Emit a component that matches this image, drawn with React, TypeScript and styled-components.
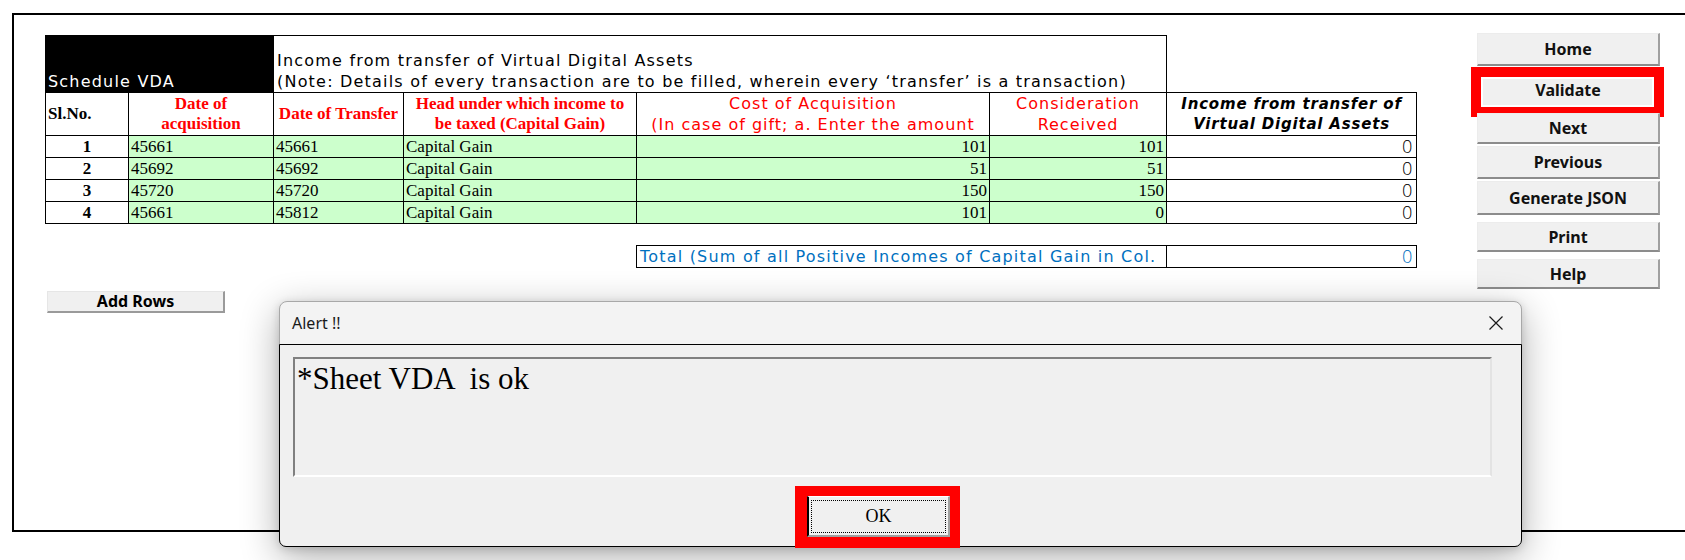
import React from 'react'
import styled, { createGlobalStyle } from 'styled-components'

const GlobalStyle = createGlobalStyle`
  html, body {
    margin: 0;
    padding: 0;
    background: #ffffff;
    overflow: hidden;
  }
`

const GOTHIC = `"DejaVu Sans", "Noto Sans CJK JP", sans-serif`
const TIMES = `"Liberation Serif", "Times New Roman", serif`
const UI = `"Noto Sans", "Open Sans", sans-serif`

const rows = [
  { no: 1, acq: '45661', tr: '45661', head: 'Capital Gain', cost: '101', cons: '101', inc: '0' },
  { no: 2, acq: '45692', tr: '45692', head: 'Capital Gain', cost: '51', cons: '51', inc: '0' },
  { no: 3, acq: '45720', tr: '45720', head: 'Capital Gain', cost: '150', cons: '150', inc: '0' },
  { no: 4, acq: '45661', tr: '45812', head: 'Capital Gain', cost: '101', cons: '0', inc: '0' }
]

const colWidths = [83, 145, 130, 233, 353, 177, 250]

const navButtons = [
  { label: 'Home', h: 33, gap: 0 },
  { label: 'Validate', h: 44, gap: 2, marked: true },
  { label: 'Next', h: 31, gap: 1 },
  { label: 'Previous', h: 33, gap: 2 },
  { label: 'Generate JSON', h: 34, gap: 2 },
  { label: 'Print', h: 30, gap: 7 },
  { label: 'Help', h: 30, gap: 7 }
]

const App = () => {
  return (
    <Page>
      <GlobalStyle />
      <Frame>
        <SheetArea>
          <Sheet>
            <colgroup>
              {colWidths.map((w, i) => (
                <Col key={i} $w={w} />
              ))}
            </colgroup>
            <tbody>
              <Row $h={57}>
                <ScheduleCell colSpan={2}>Schedule VDA</ScheduleCell>
                <TitleCell colSpan={4}>
                  Income from transfer of Virtual Digital Assets
                  <br />
                  (Note: Details of every transaction are to be filled, wherein every ‘transfer’ is a transaction)
                </TitleCell>
                <BlankCell />
              </Row>
              <Row $h={43}>
                <HeadCell $align="left">Sl.No.</HeadCell>
                <HeadCell $red>
                  Date of
                  <br />
                  acquisition
                </HeadCell>
                <HeadCell $red>Date of Transfer</HeadCell>
                <HeadCell $red>
                  Head under which income to
                  <br />
                  be taxed (Capital Gain)
                </HeadCell>
                <GothicHeadCell>
                  Cost of Acquisition
                  <br />
                  (In case of gift; a. Enter the amount
                </GothicHeadCell>
                <GothicHeadCell>
                  Consideration
                  <br />
                  Received
                </GothicHeadCell>
                <IncomeHeadCell>
                  Income from transfer of
                  <br />
                  Virtual Digital Assets
                </IncomeHeadCell>
              </Row>
              {rows.map((r) => (
                <Row $h={22} key={r.no}>
                  <NoCell>{r.no}</NoCell>
                  <DataCell $green>{r.acq}</DataCell>
                  <DataCell $green>{r.tr}</DataCell>
                  <DataCell $green>{r.head}</DataCell>
                  <DataCell $green $align="right">{r.cost}</DataCell>
                  <DataCell $green $align="right">{r.cons}</DataCell>
                  <ZeroCell>{r.inc}</ZeroCell>
                </Row>
              ))}
              <Row $h={22}>
                <BlankCell colSpan={7} />
              </Row>
              <Row $h={22}>
                <BlankCell colSpan={4} />
                <TotalCell colSpan={2}>Total (Sum of all Positive Incomes of Capital Gain in Col.</TotalCell>
                <ZeroCell $blue>0</ZeroCell>
              </Row>
            </tbody>
          </Sheet>
          <AddRowsButton>Add Rows</AddRowsButton>
        </SheetArea>

        <NavColumn>
          {navButtons.map((b) => (
            <NavButton key={b.label} $h={b.h} $gap={b.gap} $marked={!!b.marked}>
              {b.label}
            </NavButton>
          ))}
        </NavColumn>
      </Frame>

      <Dialog>
        <TitleBar>
          <DialogTitle>Alert !!</DialogTitle>
          <CloseIcon width="16" height="16" viewBox="0 0 16 16">
            <path d="M1.5 1.5 L14.5 14.5 M14.5 1.5 L1.5 14.5" stroke="#1a1a1a" strokeWidth="1.2" fill="none" />
          </CloseIcon>
        </TitleBar>
        <ClientArea>
          <MessageBox>{'*Sheet VDA  is ok'}</MessageBox>
          <OkButton>OK</OkButton>
        </ClientArea>
      </Dialog>
    </Page>
  )
}

export default App

const Page = styled.div`
  position: relative;
  width: 1685px;
  height: 560px;
  overflow: hidden;
  background: #ffffff;
`

const Frame = styled.div`
  margin: 13px 0 0 12px;
  height: 497px;
  border: 2px solid #000;
  border-right: none;
  padding: 18px 0 0 31px;
  display: flex;
  align-items: flex-start;
`

const SheetArea = styled.div`
  display: flex;
  flex-direction: column;
  margin-top: 2px;
`

const Sheet = styled.table`
  border-collapse: collapse;
  table-layout: fixed;
  width: 1371px;
`

const Col = styled.col<{ $w: number }>`
  width: ${(p) => p.$w}px;
`

const Row = styled.tr<{ $h: number }>`
  height: ${(p) => p.$h}px;
`

const BlankCell = styled.td`
  padding: 0;
  border: none;
`

const ScheduleCell = styled.td`
  background: #000;
  color: #fff;
  font-family: ${GOTHIC};
  font-size: 16px;
  letter-spacing: 1.2px;
  vertical-align: bottom;
  padding: 0 0 0 2px;
  line-height: 20px;
  border: 1px solid #000;
`

const TitleCell = styled.td`
  border: 1px solid #000;
  border-bottom: none;
  font-family: ${GOTHIC};
  font-size: 16px;
  letter-spacing: 1.2px;
  line-height: 21px;
  vertical-align: bottom;
  padding: 0 0 0 3px;
  white-space: nowrap;
  color: #000;
`

const HeadCell = styled.td<{ $red?: boolean; $align?: string }>`
  border: 1px solid #000;
  font-family: ${TIMES};
  font-weight: bold;
  font-size: 17px;
  line-height: 20px;
  color: ${(p) => (p.$red ? '#ff0000' : '#000')};
  text-align: ${(p) => p.$align || 'center'};
  vertical-align: middle;
  padding: 0 2px;
  white-space: nowrap;
  overflow: hidden;
`

const GothicHeadCell = styled.td`
  border: 1px solid #000;
  font-family: ${GOTHIC};
  font-size: 16px;
  letter-spacing: 1px;
  line-height: 21px;
  color: #ff0000;
  text-align: center;
  vertical-align: middle;
  padding: 0;
  white-space: nowrap;
  overflow: hidden;
`

const IncomeHeadCell = styled.td`
  border: 1px solid #000;
  font-family: ${GOTHIC};
  font-size: 15px;
  font-weight: bold;
  font-style: italic;
  letter-spacing: 0.8px;
  line-height: 20px;
  color: #000;
  text-align: center;
  vertical-align: middle;
  padding: 0;
  white-space: nowrap;
  overflow: hidden;
`

const NoCell = styled.td`
  border: 1px solid #000;
  font-family: ${TIMES};
  font-weight: bold;
  font-size: 17px;
  text-align: center;
  vertical-align: bottom;
  padding: 0;
  line-height: 20px;
`

const DataCell = styled.td<{ $green?: boolean; $align?: string }>`
  border: 1px solid #000;
  background: ${(p) => (p.$green ? '#ccffcc' : '#fff')};
  font-family: ${TIMES};
  font-size: 17px;
  text-align: ${(p) => p.$align || 'left'};
  vertical-align: bottom;
  padding: 0 2px;
  line-height: 20px;
  white-space: nowrap;
  overflow: hidden;
`

const ZeroCell = styled.td<{ $blue?: boolean }>`
  border: 1px solid #000;
  font-family: ${GOTHIC};
  font-weight: 200;
  font-size: 18px;
  color: ${(p) => (p.$blue ? '#0070c0' : '#000')};
  text-align: right;
  vertical-align: bottom;
  padding: 0 3px 0 0;
  line-height: 20px;
`

const TotalCell = styled.td`
  border: 1px solid #000;
  font-family: ${GOTHIC};
  font-size: 16px;
  letter-spacing: 1.2px;
  color: #0070c0;
  vertical-align: bottom;
  padding: 0 0 0 3px;
  line-height: 20px;
  white-space: nowrap;
  overflow: hidden;
`

const AddRowsButton = styled.div`
  margin: 23px 0 0 2px;
  width: 178px;
  height: 22px;
  box-sizing: border-box;
  background: #f0f0f0;
  border-top: 1px solid #e6e6e6;
  border-left: 1px solid #e6e6e6;
  border-right: 2px solid #9a9a9a;
  border-bottom: 2px solid #9a9a9a;
  font-family: ${UI};
  font-weight: bold;
  font-size: 16px;
  line-height: 19px;
  text-align: center;
  color: #000;
`

const NavColumn = styled.div`
  margin-left: 60px;
  width: 183px;
  display: flex;
  flex-direction: column;
`

const NavButton = styled.div<{ $h: number; $gap: number; $marked: boolean }>`
  position: relative;
  margin-top: ${(p) => p.$gap}px;
  height: ${(p) => p.$h}px;
  box-sizing: border-box;
  background: #f0f0f0;
  border-top: 1px solid #ececec;
  border-left: 1px solid #ececec;
  border-right: 2px solid #a0a0a0;
  border-bottom: 2px solid #8c8c8c;
  display: flex;
  align-items: center;
  justify-content: center;
  font-family: ${UI};
  font-weight: bold;
  font-size: 16px;
  color: #111;

  ${(p) =>
    p.$marked &&
    `
    &::after {
      content: '';
      position: absolute;
      left: -7px;
      right: -6px;
      top: -2px;
      bottom: -7px;
      border: 10px solid #ff0000;
      box-shadow: inset 0 0 0 2px #ffffff;
    }
  `}
`

const Dialog = styled.div`
  position: absolute;
  left: 279px;
  top: 301px;
  width: 1243px;
  height: 246px;
  box-sizing: border-box;
  display: flex;
  flex-direction: column;
  background: #f3f3f3;
  border: 1px solid #a8a8a8;
  border-radius: 8px;
  box-shadow: 0 10px 38px rgba(0, 0, 0, 0.32), 0 2px 8px rgba(0, 0, 0, 0.15);
`

const TitleBar = styled.div`
  height: 42px;
  display: flex;
  align-items: center;
  justify-content: space-between;
  padding: 0 17px 0 12px;
`

const DialogTitle = styled.span`
  font-family: ${UI};
  font-size: 16px;
  color: #1a1a1a;
`

const CloseIcon = styled.svg`
  display: block;
`

const ClientArea = styled.div`
  flex: 1;
  background: #f0f0f0;
  border: 1px solid #000;
  border-radius: 0 0 7px 7px;
  margin: 0 -1px -1px -1px;
  padding: 12px 0 0 13px;
  display: flex;
  flex-direction: column;
  align-items: flex-start;
`

const MessageBox = styled.div`
  width: 1199px;
  height: 120px;
  box-sizing: border-box;
  background: #f0f0f0;
  border-top: 2px solid #808080;
  border-left: 2px solid #808080;
  border-right: 2px solid #e3e3e3;
  border-bottom: 2px solid #ffffff;
  padding: 2px;
  font-family: ${TIMES};
  font-size: 31px;
  line-height: 36px;
  white-space: pre;
  color: #000;
`

const OkButton = styled.div`
  position: relative;
  margin: 19px 0 0 514px;
  width: 143px;
  height: 41px;
  box-sizing: border-box;
  background: #f0f0f0;
  border-style: solid;
  border-width: 1px 2px 2px 2px;
  border-color: #ffffff #a0a0a0 #a0a0a0 #000000;
  outline: 1px dotted #000;
  outline-offset: -5px;
  display: flex;
  align-items: center;
  justify-content: center;
  font-family: ${TIMES};
  font-size: 18px;
  color: #000;

  &::after {
    content: '';
    position: absolute;
    left: -14px;
    right: -12px;
    top: -11px;
    bottom: -13px;
    border-style: solid;
    border-color: #ff0000;
    border-width: 10px 10px 11px 12px;
  }
`
